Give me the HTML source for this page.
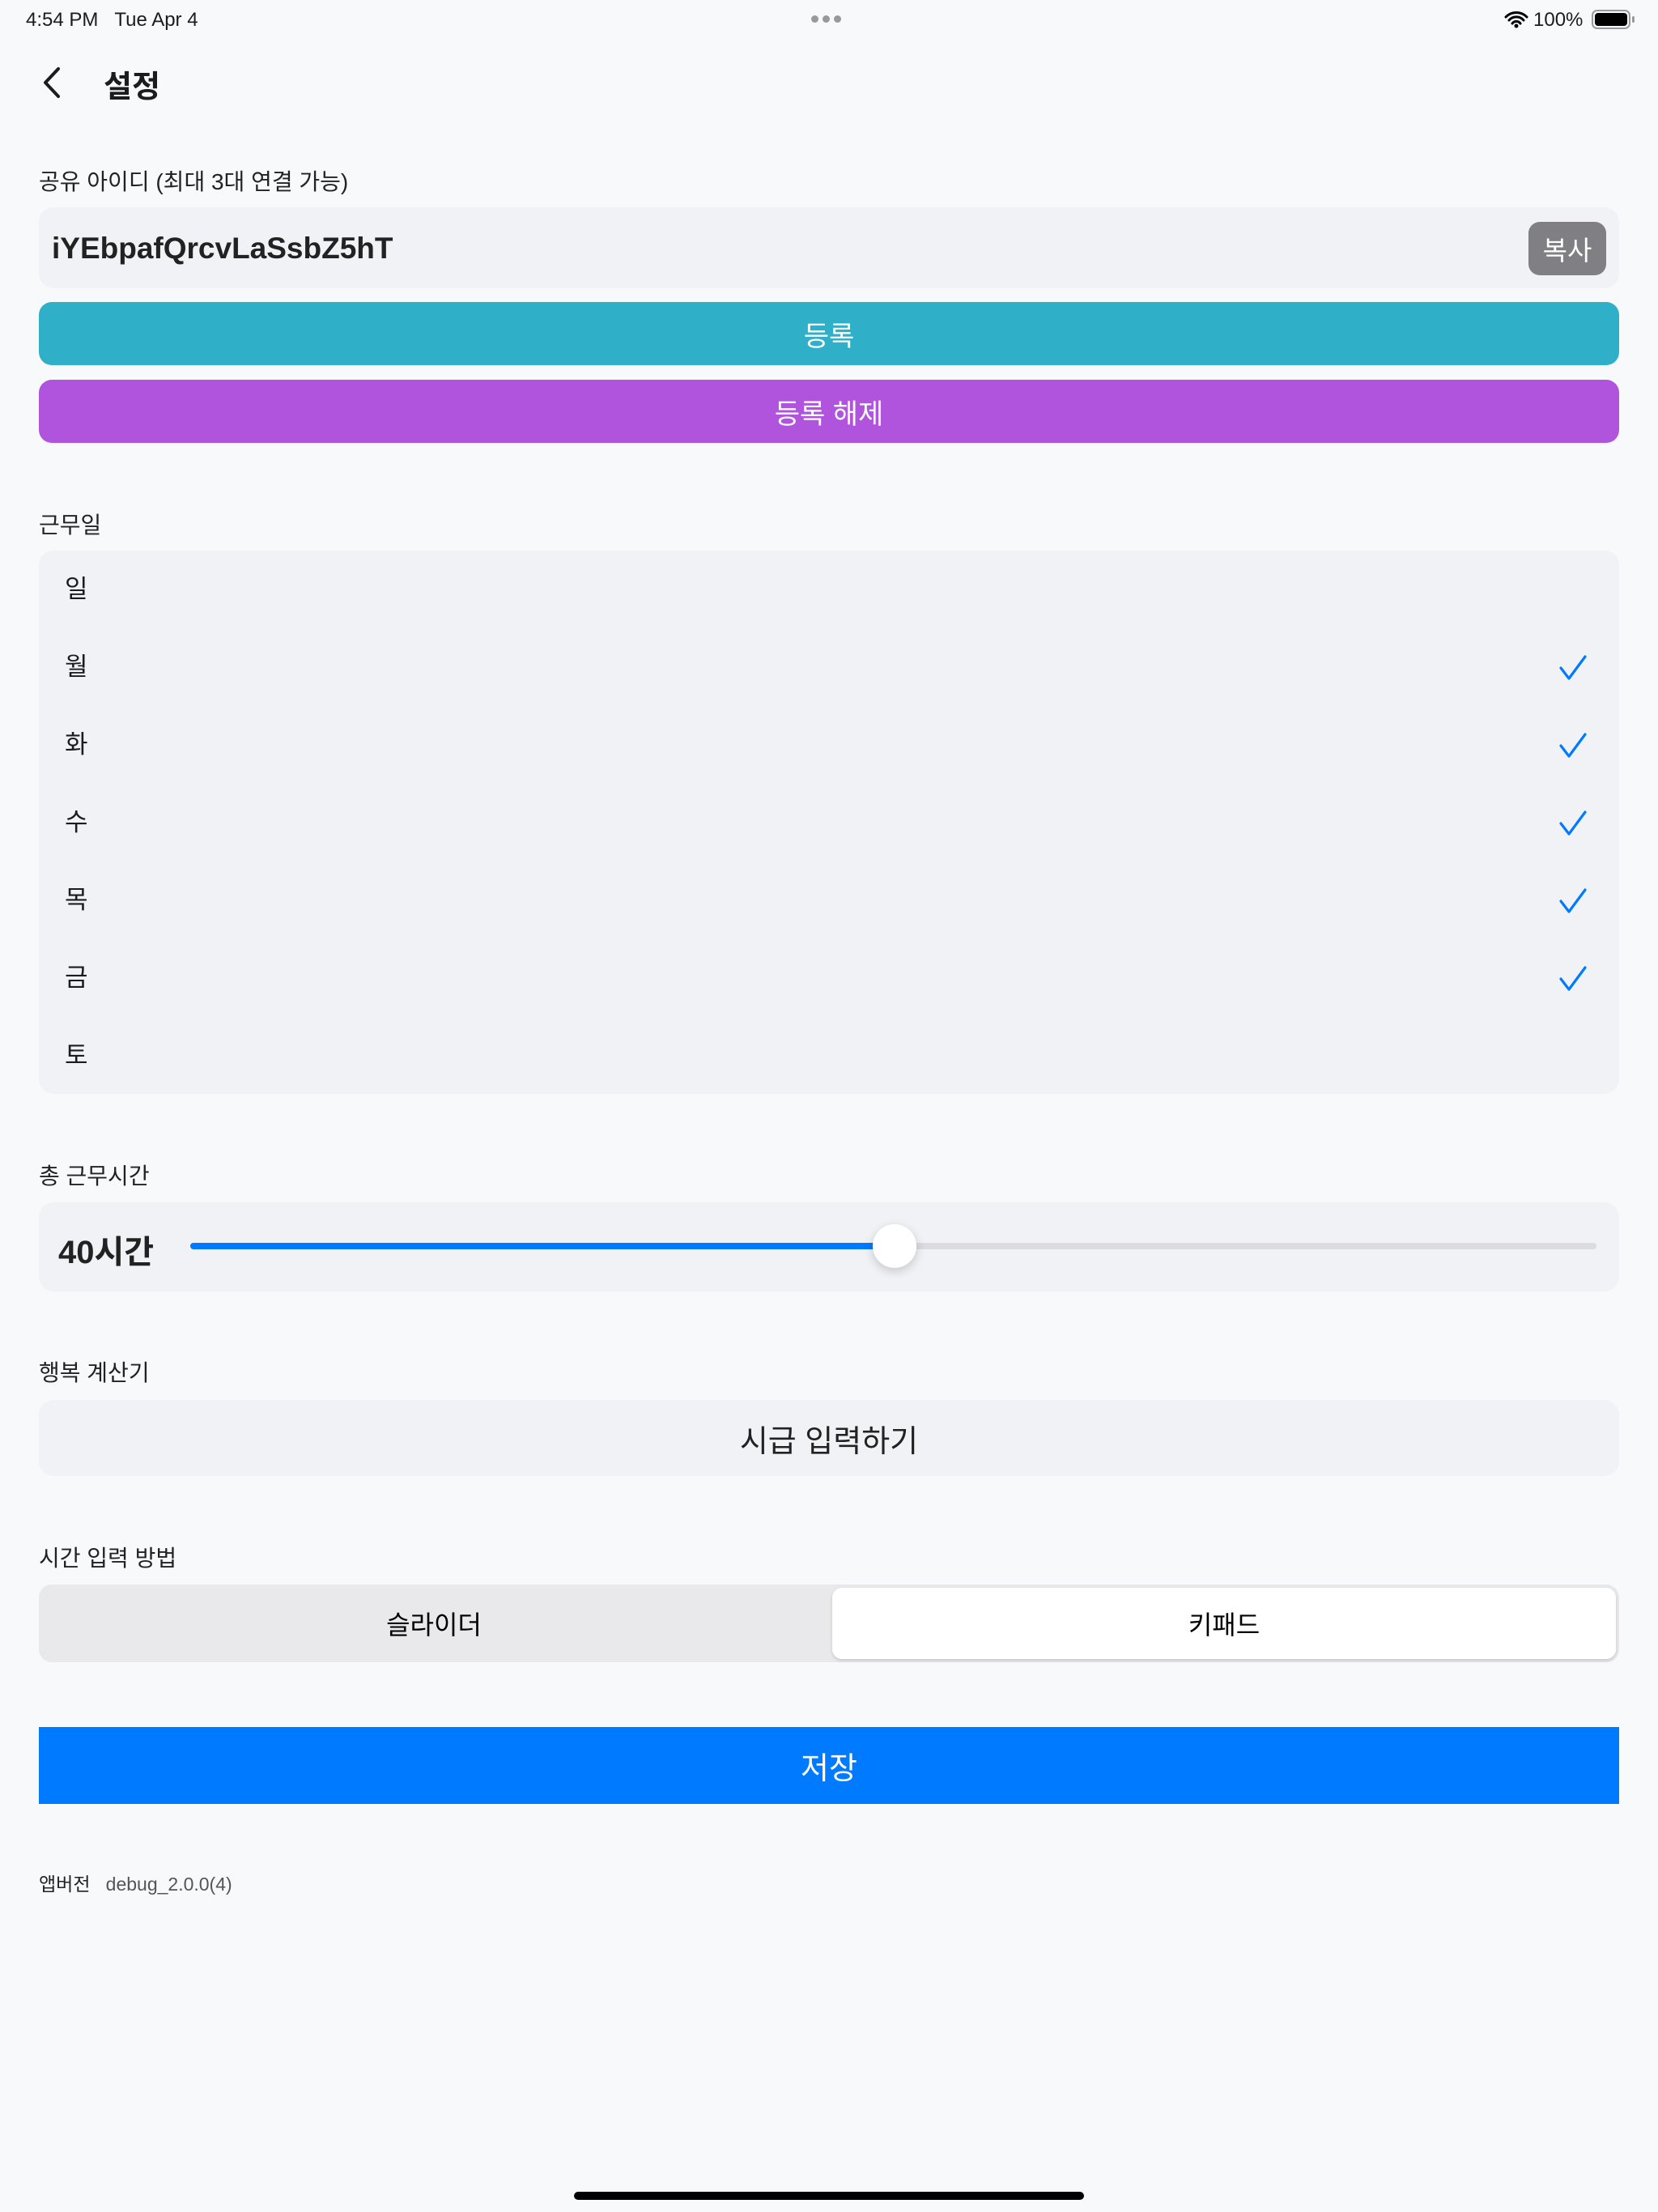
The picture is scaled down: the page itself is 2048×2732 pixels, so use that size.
<!DOCTYPE html>
<html><head><meta charset="utf-8"><style>
*{margin:0;padding:0;box-sizing:border-box}
body{width:2048px;height:2732px;background:#f8f9fb;font-family:"Liberation Sans","Noto Sans CJK KR",sans-serif;color:#1c1c1e;position:relative;overflow:hidden}
.a{position:absolute}
.lbl{position:absolute;left:48px;font-size:28px;color:#222}
.box{position:absolute;left:48px;width:1952px;background:#f1f2f6;border-radius:18px}
.btn{position:absolute;left:48px;width:1952px;border-radius:16px;color:#fff;font-size:34px;display:flex;align-items:center;justify-content:center}
.day{position:absolute;left:80px;font-size:31px;line-height:40px}
.chk{position:absolute;left:1924px}
</style></head><body>
<div class="a" style="left:32px;top:10px;font-size:24px;line-height:30px">4:54 PM&nbsp;&nbsp;&nbsp;Tue Apr 4</div>
<div class="a" style="left:1002px;top:19px;display:flex;gap:5px"><span style="width:9px;height:9px;border-radius:50%;background:#999"></span><span style="width:9px;height:9px;border-radius:50%;background:#999"></span><span style="width:9px;height:9px;border-radius:50%;background:#999"></span></div>
<svg class="a" style="left:1858px;top:13px" width="30" height="22" viewBox="0 0 30 22"><path d="M2 8a18 18 0 0 1 26 0M6 12a12 12 0 0 1 18 0M10 16a6 6 0 0 1 10 0" stroke="#000" stroke-width="3" fill="none" stroke-linecap="round"/><circle cx="15" cy="19" r="2.5"/></svg>
<div class="a" style="left:1894px;top:10px;font-size:24px;line-height:30px">100%</div>
<div class="a" style="left:1966px;top:12px;width:48px;height:24px;border:2px solid #999;border-radius:7px;padding:2px"><div style="width:100%;height:100%;background:#000;border-radius:4px"></div></div>
<div class="a" style="left:2016px;top:20px;width:3px;height:8px;background:#999;border-radius:2px"></div>
<svg class="a" style="left:52px;top:82px" width="26" height="40" viewBox="0 0 26 40"><path d="M20 3L4 20l16 17" stroke="#1c1c1e" stroke-width="4" fill="none" stroke-linecap="round" stroke-linejoin="round"/></svg>
<div class="a" style="left:128px;top:76px;font-size:38px;font-weight:bold">설정</div>
<div class="lbl" style="top:203px">공유 아이디 (최대 3대 연결 가능)</div>
<div class="box" style="top:256px;height:100px"></div>
<div class="a" style="left:64px;top:286px;font-size:37px;font-weight:bold;color:#222">iYEbpafQrcvLaSsbZ5hT</div>
<div class="a" style="left:1888px;top:274px;width:96px;height:66px;background:#7f7f84;border-radius:14px;color:#fff;font-size:33px;display:flex;align-items:center;justify-content:center">복사</div>
<div class="btn" style="top:373px;height:78px;background:#2fb0c8">등록</div>
<div class="btn" style="top:469px;height:78px;background:#b054de">등록 해제</div>
<div class="lbl" style="top:627px">근무일</div>
<div class="box" style="top:680px;height:671px"></div>
<div class="day" style="top:708px">일</div>
<div class="day" style="top:804px">월</div>
<div class="day" style="top:900px">화</div>
<div class="day" style="top:996px">수</div>
<div class="day" style="top:1092px">목</div>
<div class="day" style="top:1188px">금</div>
<div class="day" style="top:1284px">토</div>
<svg class="chk" style="top:808px" width="38" height="34" viewBox="0 0 38 34"><path d="M4 17l10 13L34 3" stroke="#007aff" stroke-width="3.2" fill="none" stroke-linecap="round" stroke-linejoin="round"/></svg>
<svg class="chk" style="top:904px" width="38" height="34" viewBox="0 0 38 34"><path d="M4 17l10 13L34 3" stroke="#007aff" stroke-width="3.2" fill="none" stroke-linecap="round" stroke-linejoin="round"/></svg>
<svg class="chk" style="top:1000px" width="38" height="34" viewBox="0 0 38 34"><path d="M4 17l10 13L34 3" stroke="#007aff" stroke-width="3.2" fill="none" stroke-linecap="round" stroke-linejoin="round"/></svg>
<svg class="chk" style="top:1096px" width="38" height="34" viewBox="0 0 38 34"><path d="M4 17l10 13L34 3" stroke="#007aff" stroke-width="3.2" fill="none" stroke-linecap="round" stroke-linejoin="round"/></svg>
<svg class="chk" style="top:1192px" width="38" height="34" viewBox="0 0 38 34"><path d="M4 17l10 13L34 3" stroke="#007aff" stroke-width="3.2" fill="none" stroke-linecap="round" stroke-linejoin="round"/></svg>
<div class="lbl" style="top:1431px">총 근무시간</div>
<div class="box" style="top:1485px;height:110px"></div>
<div class="a" style="left:72px;top:1514px;font-size:40px;font-weight:bold;color:#222">40시간</div>
<div class="a" style="left:235px;top:1535px;width:1737px;height:8px;background:#dcdce0;border-radius:4px"></div>
<div class="a" style="left:235px;top:1535px;width:870px;height:8px;background:#007aff;border-radius:4px"></div>
<div class="a" style="left:1078px;top:1512px;width:54px;height:54px;background:#fff;border-radius:50%;box-shadow:0 4px 12px rgba(0,0,0,.18)"></div>
<div class="lbl" style="top:1674px">행복 계산기</div>
<div class="box" style="top:1729px;height:94px;display:flex;align-items:center;justify-content:center;font-size:38px;color:#222">시급 입력하기</div>
<div class="lbl" style="top:1903px">시간 입력 방법</div>
<div class="a" style="left:48px;top:1957px;width:1952px;height:96px;background:#e9e9eb;border-radius:16px"></div>
<div class="a" style="left:48px;top:1957px;width:976px;height:96px;display:flex;align-items:center;justify-content:center;font-size:32px;color:#000">슬라이더</div>
<div class="a" style="left:1028px;top:1961px;width:968px;height:88px;background:#fff;border-radius:12px;box-shadow:0 2px 4px rgba(0,0,0,.15);display:flex;align-items:center;justify-content:center;font-size:32px;color:#000">키패드</div>
<div class="a" style="left:48px;top:2133px;width:1952px;height:95px;background:#007aff;color:#fff;font-size:38px;display:flex;align-items:center;justify-content:center">저장</div>
<div class="a" style="left:48px;top:2308px;font-size:23px;color:#222">앱버전&nbsp;&nbsp;&nbsp;<span style="color:#555">debug_2.0.0(4)</span></div>
<div class="a" style="left:709px;top:2707px;width:630px;height:10px;background:#000;border-radius:5px"></div>
</body></html>
